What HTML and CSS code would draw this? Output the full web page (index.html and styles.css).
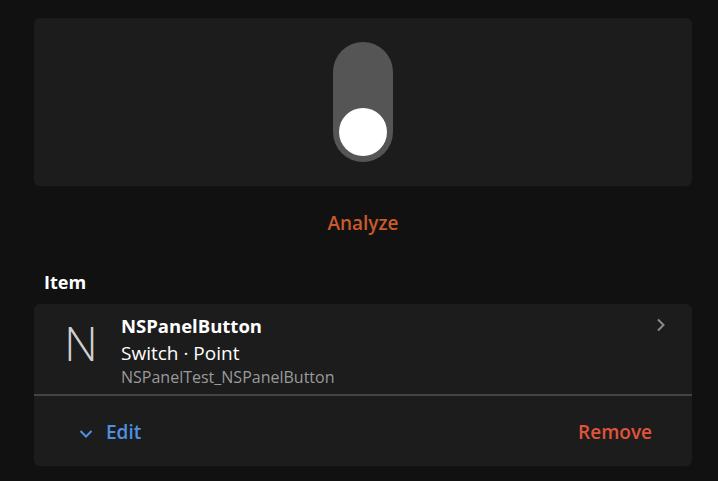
FILE: index.html
```html
<!DOCTYPE html>
<html lang="en">
  <head>
    <title>Item</title>
    <link rel="stylesheet" href="styles.css">
  </head>
  <body>
    <div class="page">
      <div class="preview">
        <div class="toggle">
          <div class="knob"></div>
        </div>
      </div>
      <button class="analyze">Analyze</button>

      <h2 class="section-title">Item</h2>
      <div class="item-card">
        <div class="item-row">
          <div class="item-letter">N</div>
          <div class="item-text">
            <div class="item-name">NSPanelButton</div>
            <div class="item-type">Switch &middot; Point</div>
            <div class="item-id">NSPanelTest_NSPanelButton</div>
          </div>
          <svg class="chevron-right" width="10" height="14" viewBox="0 0 10 14">
            <path d="M2 1.5 L7.5 7 L2 12.5" fill="none" stroke="#8a8a8a" stroke-width="2"/>
          </svg>
        </div>
        <div class="item-actions">
          <button class="edit">
            <svg width="14" height="10" viewBox="0 0 14 10">
              <path d="M1.5 2 L7 7.5 L12.5 2" fill="none" stroke="#4f8fe4" stroke-width="2"/>
            </svg>
            Edit
          </button>
          <button class="remove">Remove</button>
        </div>
      </div>
    </div>
  </body>
</html>
```

FILE: styles.css
```css
body {
  margin: 0;
  background-color: #111111;
  font-family: "Open Sans", "Noto Sans", sans-serif;
  color: #ffffff;
}
.page {
  padding: 18px 26px 15px 34px;
}
.preview {
  height: 168px;
  background-color: #1c1c1c;
  border-radius: 6px;
  display: flex;
  align-items: center;
  justify-content: center;
}
.toggle {
  width: 60px;
  height: 120px;
  border-radius: 30px;
  background-color: #555555;
  display: flex;
  flex-direction: column;
  justify-content: flex-end;
  align-items: center;
  padding-bottom: 6px;
  box-sizing: border-box;
}
.knob {
  width: 48px;
  height: 48px;
  border-radius: 50%;
  background-color: #ffffff;
}
button {
  font-family: inherit;
  background: none;
  border: none;
  padding: 0;
  cursor: pointer;
}
.analyze {
  display: block;
  margin: 22px auto 0;
  font-size: 19px;
  font-weight: 600;
  color: #c95a2c;
  line-height: 30px;
}
.section-title {
  margin: 31px 0 0 10px;
  font-size: 18px;
  font-weight: 700;
  line-height: 26px;
}
.item-card {
  margin-top: 9px;
  background-color: #1c1c1c;
  border-radius: 6px;
}
.item-row {
  display: flex;
  align-items: flex-start;
  height: 92px;
  box-sizing: border-box;
  padding: 9px 26px 0 30px;
  border-bottom: 2px solid #444444;
}
.item-letter {
  width: 57px;
  font-size: 47px;
  font-weight: 300;
  color: #d0d0d0;
  line-height: 60px;
}
.item-text {
  flex: 1;
}
.item-name {
  font-size: 18.5px;
  font-weight: 700;
  line-height: 26px;
}
.item-type {
  font-size: 19px;
  line-height: 28px;
}
.item-id {
  font-size: 16px;
  color: #9a9a9a;
  line-height: 20px;
}
.chevron-right {
  margin-top: 5px;
}
.item-actions {
  display: flex;
  justify-content: space-between;
  align-items: center;
  height: 70px;
  padding: 2px 40px 0 45px;
  box-sizing: border-box;
}
.edit {
  font-size: 19px;
  font-weight: 600;
  color: #4f8fe4;
  display: flex;
  align-items: center;
  gap: 13px;
}
.edit svg {
  margin-top: 4px;
}
.remove {
  font-size: 19px;
  font-weight: 600;
  color: #e0543a;
}
```
